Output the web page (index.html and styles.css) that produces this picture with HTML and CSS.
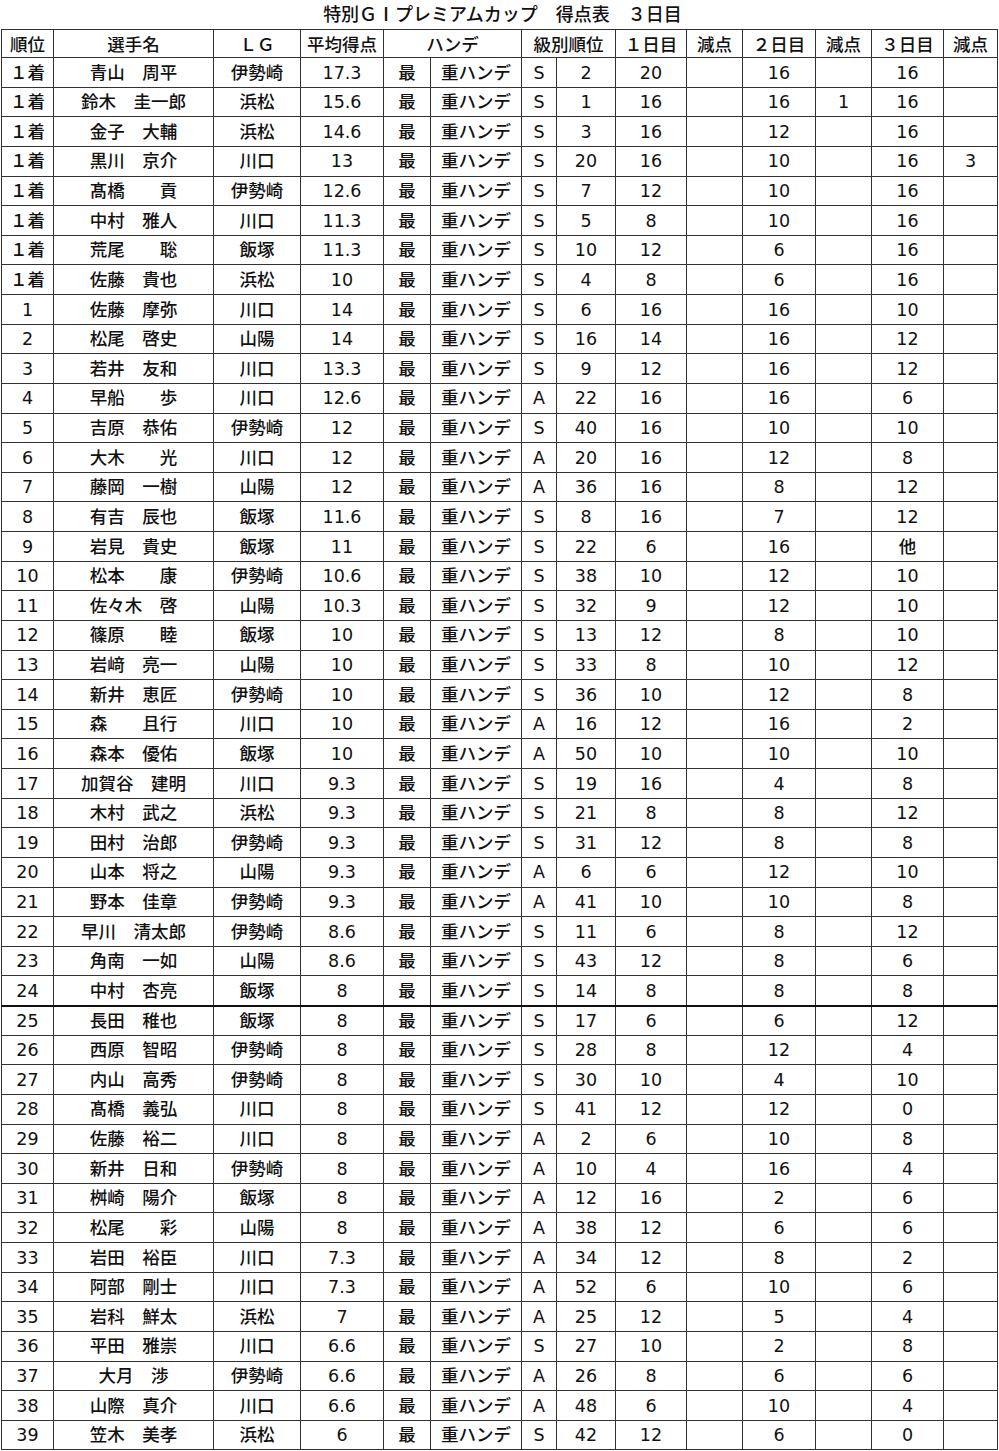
FILE: index.html
```html
<!DOCTYPE html>
<html lang="ja">
<head>
<meta charset="utf-8">
<title>特別ＧⅠプレミアムカップ　得点表　３日目</title>
<link rel="stylesheet" href="styles.css">
</head>
<body>
<h1 class="title">特別ＧⅠプレミアムカップ　得点表　３日目</h1>
<table class="score">
<colgroup>
<col class="c-rank"><col class="c-name"><col class="c-lg"><col class="c-avg"><col class="c-h1"><col class="c-h2"><col class="c-cls"><col class="c-cno"><col class="c-d"><col class="c-m"><col class="c-d2"><col class="c-m"><col class="c-d3"><col class="c-m2">
</colgroup>
<thead>
<tr><th>順位</th><th>選手名</th><th>ＬＧ</th><th>平均得点</th><th colspan="2">ハンデ</th><th colspan="2">級別順位</th><th>１日目</th><th>減点</th><th>２日目</th><th>減点</th><th>３日目</th><th>減点</th></tr>
</thead>
<tbody>
<tr><td>１着</td><td>青山　周平</td><td>伊勢崎</td><td>17.3</td><td>最</td><td>重ハンデ</td><td>S</td><td>2</td><td>20</td><td></td><td>16</td><td></td><td>16</td><td></td></tr>
<tr><td>１着</td><td>鈴木　圭一郎</td><td>浜松</td><td>15.6</td><td>最</td><td>重ハンデ</td><td>S</td><td>1</td><td>16</td><td></td><td>16</td><td>1</td><td>16</td><td></td></tr>
<tr><td>１着</td><td>金子　大輔</td><td>浜松</td><td>14.6</td><td>最</td><td>重ハンデ</td><td>S</td><td>3</td><td>16</td><td></td><td>12</td><td></td><td>16</td><td></td></tr>
<tr><td>１着</td><td>黒川　京介</td><td>川口</td><td>13</td><td>最</td><td>重ハンデ</td><td>S</td><td>20</td><td>16</td><td></td><td>10</td><td></td><td>16</td><td>3</td></tr>
<tr><td>１着</td><td>髙橋　　貢</td><td>伊勢崎</td><td>12.6</td><td>最</td><td>重ハンデ</td><td>S</td><td>7</td><td>12</td><td></td><td>10</td><td></td><td>16</td><td></td></tr>
<tr><td>１着</td><td>中村　雅人</td><td>川口</td><td>11.3</td><td>最</td><td>重ハンデ</td><td>S</td><td>5</td><td>8</td><td></td><td>10</td><td></td><td>16</td><td></td></tr>
<tr><td>１着</td><td>荒尾　　聡</td><td>飯塚</td><td>11.3</td><td>最</td><td>重ハンデ</td><td>S</td><td>10</td><td>12</td><td></td><td>6</td><td></td><td>16</td><td></td></tr>
<tr><td>１着</td><td>佐藤　貴也</td><td>浜松</td><td>10</td><td>最</td><td>重ハンデ</td><td>S</td><td>4</td><td>8</td><td></td><td>6</td><td></td><td>16</td><td></td></tr>
<tr><td>1</td><td>佐藤　摩弥</td><td>川口</td><td>14</td><td>最</td><td>重ハンデ</td><td>S</td><td>6</td><td>16</td><td></td><td>16</td><td></td><td>10</td><td></td></tr>
<tr><td>2</td><td>松尾　啓史</td><td>山陽</td><td>14</td><td>最</td><td>重ハンデ</td><td>S</td><td>16</td><td>14</td><td></td><td>16</td><td></td><td>12</td><td></td></tr>
<tr><td>3</td><td>若井　友和</td><td>川口</td><td>13.3</td><td>最</td><td>重ハンデ</td><td>S</td><td>9</td><td>12</td><td></td><td>16</td><td></td><td>12</td><td></td></tr>
<tr><td>4</td><td>早船　　歩</td><td>川口</td><td>12.6</td><td>最</td><td>重ハンデ</td><td>A</td><td>22</td><td>16</td><td></td><td>16</td><td></td><td>6</td><td></td></tr>
<tr><td>5</td><td>吉原　恭佑</td><td>伊勢崎</td><td>12</td><td>最</td><td>重ハンデ</td><td>S</td><td>40</td><td>16</td><td></td><td>10</td><td></td><td>10</td><td></td></tr>
<tr><td>6</td><td>大木　　光</td><td>川口</td><td>12</td><td>最</td><td>重ハンデ</td><td>A</td><td>20</td><td>16</td><td></td><td>12</td><td></td><td>8</td><td></td></tr>
<tr><td>7</td><td>藤岡　一樹</td><td>山陽</td><td>12</td><td>最</td><td>重ハンデ</td><td>A</td><td>36</td><td>16</td><td></td><td>8</td><td></td><td>12</td><td></td></tr>
<tr><td>8</td><td>有吉　辰也</td><td>飯塚</td><td>11.6</td><td>最</td><td>重ハンデ</td><td>S</td><td>8</td><td>16</td><td></td><td>7</td><td></td><td>12</td><td></td></tr>
<tr><td>9</td><td>岩見　貴史</td><td>飯塚</td><td>11</td><td>最</td><td>重ハンデ</td><td>S</td><td>22</td><td>6</td><td></td><td>16</td><td></td><td>他</td><td></td></tr>
<tr><td>10</td><td>松本　　康</td><td>伊勢崎</td><td>10.6</td><td>最</td><td>重ハンデ</td><td>S</td><td>38</td><td>10</td><td></td><td>12</td><td></td><td>10</td><td></td></tr>
<tr><td>11</td><td>佐々木　啓</td><td>山陽</td><td>10.3</td><td>最</td><td>重ハンデ</td><td>S</td><td>32</td><td>9</td><td></td><td>12</td><td></td><td>10</td><td></td></tr>
<tr><td>12</td><td>篠原　　睦</td><td>飯塚</td><td>10</td><td>最</td><td>重ハンデ</td><td>S</td><td>13</td><td>12</td><td></td><td>8</td><td></td><td>10</td><td></td></tr>
<tr><td>13</td><td>岩﨑　亮一</td><td>山陽</td><td>10</td><td>最</td><td>重ハンデ</td><td>S</td><td>33</td><td>8</td><td></td><td>10</td><td></td><td>12</td><td></td></tr>
<tr><td>14</td><td>新井　恵匠</td><td>伊勢崎</td><td>10</td><td>最</td><td>重ハンデ</td><td>S</td><td>36</td><td>10</td><td></td><td>12</td><td></td><td>8</td><td></td></tr>
<tr><td>15</td><td>森　　且行</td><td>川口</td><td>10</td><td>最</td><td>重ハンデ</td><td>A</td><td>16</td><td>12</td><td></td><td>16</td><td></td><td>2</td><td></td></tr>
<tr><td>16</td><td>森本　優佑</td><td>飯塚</td><td>10</td><td>最</td><td>重ハンデ</td><td>A</td><td>50</td><td>10</td><td></td><td>10</td><td></td><td>10</td><td></td></tr>
<tr><td>17</td><td>加賀谷　建明</td><td>川口</td><td>9.3</td><td>最</td><td>重ハンデ</td><td>S</td><td>19</td><td>16</td><td></td><td>4</td><td></td><td>8</td><td></td></tr>
<tr><td>18</td><td>木村　武之</td><td>浜松</td><td>9.3</td><td>最</td><td>重ハンデ</td><td>S</td><td>21</td><td>8</td><td></td><td>8</td><td></td><td>12</td><td></td></tr>
<tr><td>19</td><td>田村　治郎</td><td>伊勢崎</td><td>9.3</td><td>最</td><td>重ハンデ</td><td>S</td><td>31</td><td>12</td><td></td><td>8</td><td></td><td>8</td><td></td></tr>
<tr><td>20</td><td>山本　将之</td><td>山陽</td><td>9.3</td><td>最</td><td>重ハンデ</td><td>A</td><td>6</td><td>6</td><td></td><td>12</td><td></td><td>10</td><td></td></tr>
<tr><td>21</td><td>野本　佳章</td><td>伊勢崎</td><td>9.3</td><td>最</td><td>重ハンデ</td><td>A</td><td>41</td><td>10</td><td></td><td>10</td><td></td><td>8</td><td></td></tr>
<tr><td>22</td><td>早川　清太郎</td><td>伊勢崎</td><td>8.6</td><td>最</td><td>重ハンデ</td><td>S</td><td>11</td><td>6</td><td></td><td>8</td><td></td><td>12</td><td></td></tr>
<tr><td>23</td><td>角南　一如</td><td>山陽</td><td>8.6</td><td>最</td><td>重ハンデ</td><td>S</td><td>43</td><td>12</td><td></td><td>8</td><td></td><td>6</td><td></td></tr>
<tr class="cut"><td>24</td><td>中村　杏亮</td><td>飯塚</td><td>8</td><td>最</td><td>重ハンデ</td><td>S</td><td>14</td><td>8</td><td></td><td>8</td><td></td><td>8</td><td></td></tr>
<tr><td>25</td><td>長田　稚也</td><td>飯塚</td><td>8</td><td>最</td><td>重ハンデ</td><td>S</td><td>17</td><td>6</td><td></td><td>6</td><td></td><td>12</td><td></td></tr>
<tr><td>26</td><td>西原　智昭</td><td>伊勢崎</td><td>8</td><td>最</td><td>重ハンデ</td><td>S</td><td>28</td><td>8</td><td></td><td>12</td><td></td><td>4</td><td></td></tr>
<tr><td>27</td><td>内山　高秀</td><td>伊勢崎</td><td>8</td><td>最</td><td>重ハンデ</td><td>S</td><td>30</td><td>10</td><td></td><td>4</td><td></td><td>10</td><td></td></tr>
<tr><td>28</td><td>髙橋　義弘</td><td>川口</td><td>8</td><td>最</td><td>重ハンデ</td><td>S</td><td>41</td><td>12</td><td></td><td>12</td><td></td><td>0</td><td></td></tr>
<tr><td>29</td><td>佐藤　裕二</td><td>川口</td><td>8</td><td>最</td><td>重ハンデ</td><td>A</td><td>2</td><td>6</td><td></td><td>10</td><td></td><td>8</td><td></td></tr>
<tr><td>30</td><td>新井　日和</td><td>伊勢崎</td><td>8</td><td>最</td><td>重ハンデ</td><td>A</td><td>10</td><td>4</td><td></td><td>16</td><td></td><td>4</td><td></td></tr>
<tr><td>31</td><td>桝崎　陽介</td><td>飯塚</td><td>8</td><td>最</td><td>重ハンデ</td><td>A</td><td>12</td><td>16</td><td></td><td>2</td><td></td><td>6</td><td></td></tr>
<tr><td>32</td><td>松尾　　彩</td><td>山陽</td><td>8</td><td>最</td><td>重ハンデ</td><td>A</td><td>38</td><td>12</td><td></td><td>6</td><td></td><td>6</td><td></td></tr>
<tr><td>33</td><td>岩田　裕臣</td><td>川口</td><td>7.3</td><td>最</td><td>重ハンデ</td><td>A</td><td>34</td><td>12</td><td></td><td>8</td><td></td><td>2</td><td></td></tr>
<tr><td>34</td><td>阿部　剛士</td><td>川口</td><td>7.3</td><td>最</td><td>重ハンデ</td><td>A</td><td>52</td><td>6</td><td></td><td>10</td><td></td><td>6</td><td></td></tr>
<tr><td>35</td><td>岩科　鮮太</td><td>浜松</td><td>7</td><td>最</td><td>重ハンデ</td><td>A</td><td>25</td><td>12</td><td></td><td>5</td><td></td><td>4</td><td></td></tr>
<tr><td>36</td><td>平田　雅崇</td><td>川口</td><td>6.6</td><td>最</td><td>重ハンデ</td><td>S</td><td>27</td><td>10</td><td></td><td>2</td><td></td><td>8</td><td></td></tr>
<tr><td>37</td><td>大月　渉</td><td>伊勢崎</td><td>6.6</td><td>最</td><td>重ハンデ</td><td>A</td><td>26</td><td>8</td><td></td><td>6</td><td></td><td>6</td><td></td></tr>
<tr><td>38</td><td>山際　真介</td><td>川口</td><td>6.6</td><td>最</td><td>重ハンデ</td><td>A</td><td>48</td><td>6</td><td></td><td>10</td><td></td><td>4</td><td></td></tr>
<tr><td>39</td><td>笠木　美孝</td><td>浜松</td><td>6</td><td>最</td><td>重ハンデ</td><td>S</td><td>42</td><td>12</td><td></td><td>6</td><td></td><td>0</td><td></td></tr>
</tbody>
</table>
</body>
</html>
```
FILE: styles.css
```css
html, body {
  margin: 0;
  padding: 0;
  background: #ffffff;
}

body {
  width: 999px;
  font-family: "DejaVu Sans", "Noto Sans CJK JP", sans-serif;
  color: #111111;
}

.title {
  margin: 0;
  height: 29px;
  line-height: 27px;
  font-family: "Noto Sans CJK JP", sans-serif;
  font-size: 18px;
  font-weight: 500;
  text-align: center;
  padding-left: 6px;
}

.score {
  margin-left: 1px;
  width: 996px;
  table-layout: fixed;
  border-collapse: collapse;
  font-size: 17.5px;
}

.c-rank { width: 52px; }
.c-name { width: 160px; }
.c-lg { width: 87px; }
.c-avg { width: 83px; }
.c-h1 { width: 47px; }
.c-h2 { width: 91px; }
.c-cls { width: 35px; }
.c-cno { width: 59px; }
.c-d { width: 71px; }
.c-m { width: 56px; }
.c-d2 { width: 73px; }
.c-d3 { width: 72px; }
.c-m2 { width: 54px; }

.score th,
.score td {
  border: 1px solid #333333;
  padding: 0;
  text-align: center;
  vertical-align: middle;
  line-height: 1;
  white-space: nowrap;
  font-weight: 500;
  overflow: hidden;
}

.score th {
  font-family: "Noto Sans CJK JP", sans-serif;
}

.score td {
  padding-top: 2px;
}

.score thead tr {
  height: 28px;
}

.score tbody tr {
  height: 29.64px;
}

.score tr.cut td {
  border-bottom: 2px solid #111111;
}
```
